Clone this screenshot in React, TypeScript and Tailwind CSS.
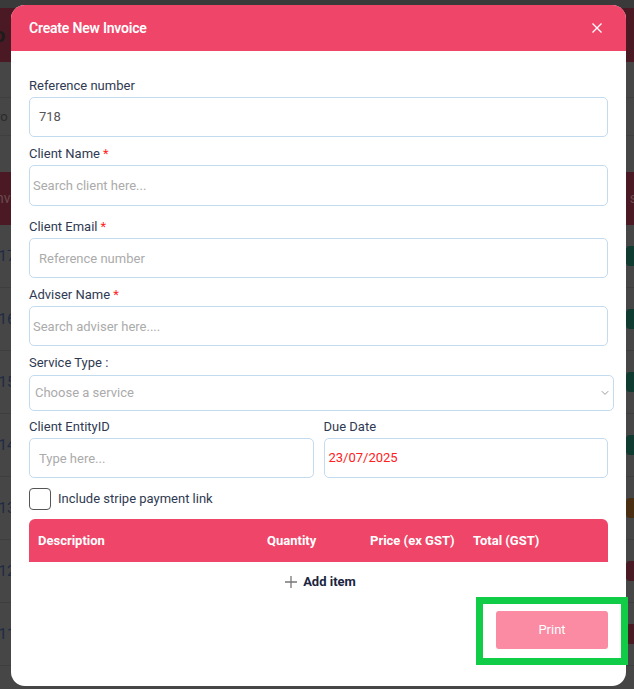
import React from "react";

function Field({
  label,
  required,
  children,
  className = "",
}: {
  label: string;
  required?: boolean;
  children: React.ReactNode;
  className?: string;
}) {
  return (
    <div className={className}>
      <div className="h-5 leading-5 text-[13px] text-[#2f3a52]">
        {label}
        {required && <span className="text-[#ff1f1f] ml-[3px]">*</span>}
      </div>
      {children}
    </div>
  );
}

const inputCls =
  "w-full rounded-[5px] border border-[#c3dbef] bg-white text-[13px] outline-none placeholder:text-[#ababab] font-[Roboto]";

const rowLabels = ["'17", "'16", "'15", "'14", "'13", "'12", "'11"];
const badgeColors = ["#0f3b30", "#0f3b30", "#0f3b30", "#0f3b30", "#4a2e12", "#4a1a24", "#4a1a24"];

export default function App() {
  return (
    <div className="relative w-[634px] h-[689px] overflow-hidden bg-[#464646] font-[Roboto]">
      {/* Background page (dimmed) */}
      <div className="flex flex-col w-full h-full">
        <div className="h-2 bg-[#3a3a3a]" />
        <div className="h-[54px] bg-[#4a1923] flex items-center px-0">
          <span className="text-[#1c1c1c] font-bold text-[20px] -ml-[6px]">o</span>
        </div>
        <div className="h-[36px] border-b border-[#3f3f3f]" />
        <div className="h-[38px] border-b border-[#3f3f3f] flex items-center">
          <span className="text-[#2a2a2a] text-[13px] -ml-[4px]">ro</span>
        </div>
        <div className="h-[36px]" />
        <div className="h-[53px] bg-[#4a1923] flex items-center justify-between">
          <span className="text-[#6a4a50] text-[14px] -ml-[4px]">nv</span>
          <span className="text-[#6a4a50] text-[14px] mr-[-3px]">s</span>
        </div>
        {rowLabels.map((l, i) => (
          <div
            key={l}
            className="h-[63px] border-b border-[#3e3e3e] flex items-center justify-between"
          >
            <span className="text-[#1f2a44] text-[15px] -ml-[4px]">{l}</span>
            <span
              className="w-[12px] h-[20px] rounded-[4px] mr-[-4px]"
              style={{ backgroundColor: badgeColors[i] }}
            />
          </div>
        ))}
      </div>

      {/* Modal */}
      <div className="absolute left-[11px] top-[5px] w-[615px] h-[681px] bg-white rounded-[14px] flex flex-col">
        <div className="h-[46px] bg-[#ef4568] rounded-t-[14px] flex items-center justify-between pl-[18px] pr-[24px]">
          <span className="text-white text-[14px] font-semibold tracking-[-0.2px]">
            Create New Invoice
          </span>
          <svg width="10" height="10" viewBox="0 0 10 10">
            <path d="M0.5 0.5 L9.5 9.5 M9.5 0.5 L0.5 9.5" stroke="white" strokeWidth="1.3" />
          </svg>
        </div>

        <div className="flex flex-col px-[18px] pt-[25px]">
          <Field label="Reference number">
            <div className="mt-px h-10 rounded-[5px] border border-[#c3dbef] flex items-center px-[9px] text-[13px] text-[#555]">
              718
            </div>
          </Field>

          <Field label="Client Name" required className="mt-[7px]">
            <input className={inputCls + " mt-px h-[41px] px-[3px]"} placeholder="Search client here..." />
          </Field>

          <Field label="Client Email" required className="mt-[11px]">
            <input className={inputCls + " mt-px h-10 px-[9px]"} placeholder="Reference number" />
          </Field>

          <Field label="Adviser Name" required className="mt-[7px]">
            <input className={inputCls + " mt-px h-10 px-[3px]"} placeholder="Search adviser here...." />
          </Field>

          <Field label="Service Type :" className="mt-[7px]">
            <div className="mt-[2px] h-[36px] w-[585px] rounded-[5px] border border-[#c3dbef] flex items-center justify-between pl-[5px] pr-[4px] text-[13px] text-[#ababab]">
              <span>Choose a service</span>
              <svg width="8" height="6" viewBox="0 0 8 6">
                <path d="M0.8 1.2 L4 4.4 L7.2 1.2" fill="none" stroke="#9a9a9a" strokeWidth="1" />
              </svg>
            </div>
          </Field>

          <div className="mt-[6px] grid grid-cols-2 gap-[10px]">
            <Field label="Client EntityID">
              <input className={inputCls + " mt-px h-10 px-[9px]"} placeholder="Type here..." />
            </Field>
            <Field label="Due Date">
              <div className="mt-px h-10 rounded-[5px] border border-[#c3dbef] flex items-center px-[4px] text-[13px] text-[#ff2020]">
                23/07/2025
              </div>
            </Field>
          </div>

          <div className="mt-[10px] flex items-center gap-[7px] h-[22px]">
            <span className="w-[22px] h-[22px] rounded-[4px] border border-[#555] bg-white" />
            <span className="text-[13px] text-[#2f3a52]">Include stripe payment link</span>
          </div>

          <div className="mt-[9px] h-[43px] bg-[#ef4568] rounded-t-[6px] flex items-center pl-[9px] text-white text-[13px] font-bold">
            <span className="w-[229px]">Description</span>
            <span className="w-[103px]">Quantity</span>
            <span className="w-[103px]">Price (ex GST)</span>
            <span>Total (GST)</span>
          </div>

          <div className="mt-[10px] h-5 flex items-center justify-center gap-[6px] pl-[4px]">
            <svg width="12" height="12" viewBox="0 0 12 12">
              <path d="M6 0 V12 M0 6 H12" stroke="#777" strokeWidth="1.3" />
            </svg>
            <span className="text-[13px] font-bold text-[#1b2540]">Add item</span>
          </div>

          <div className="mt-[19px] flex justify-end">
            <div className="relative">
              <button className="w-[112px] h-[38px] rounded-[3px] bg-[#fb8aa3] text-white text-[13px]">
                Print
              </button>
              <span className="absolute left-[-20px] right-[-20px] top-[-14px] bottom-[-16px] border-[7px] border-[#11cc47] pointer-events-none" />
            </div>
          </div>
        </div>
      </div>
    </div>
  );
}
